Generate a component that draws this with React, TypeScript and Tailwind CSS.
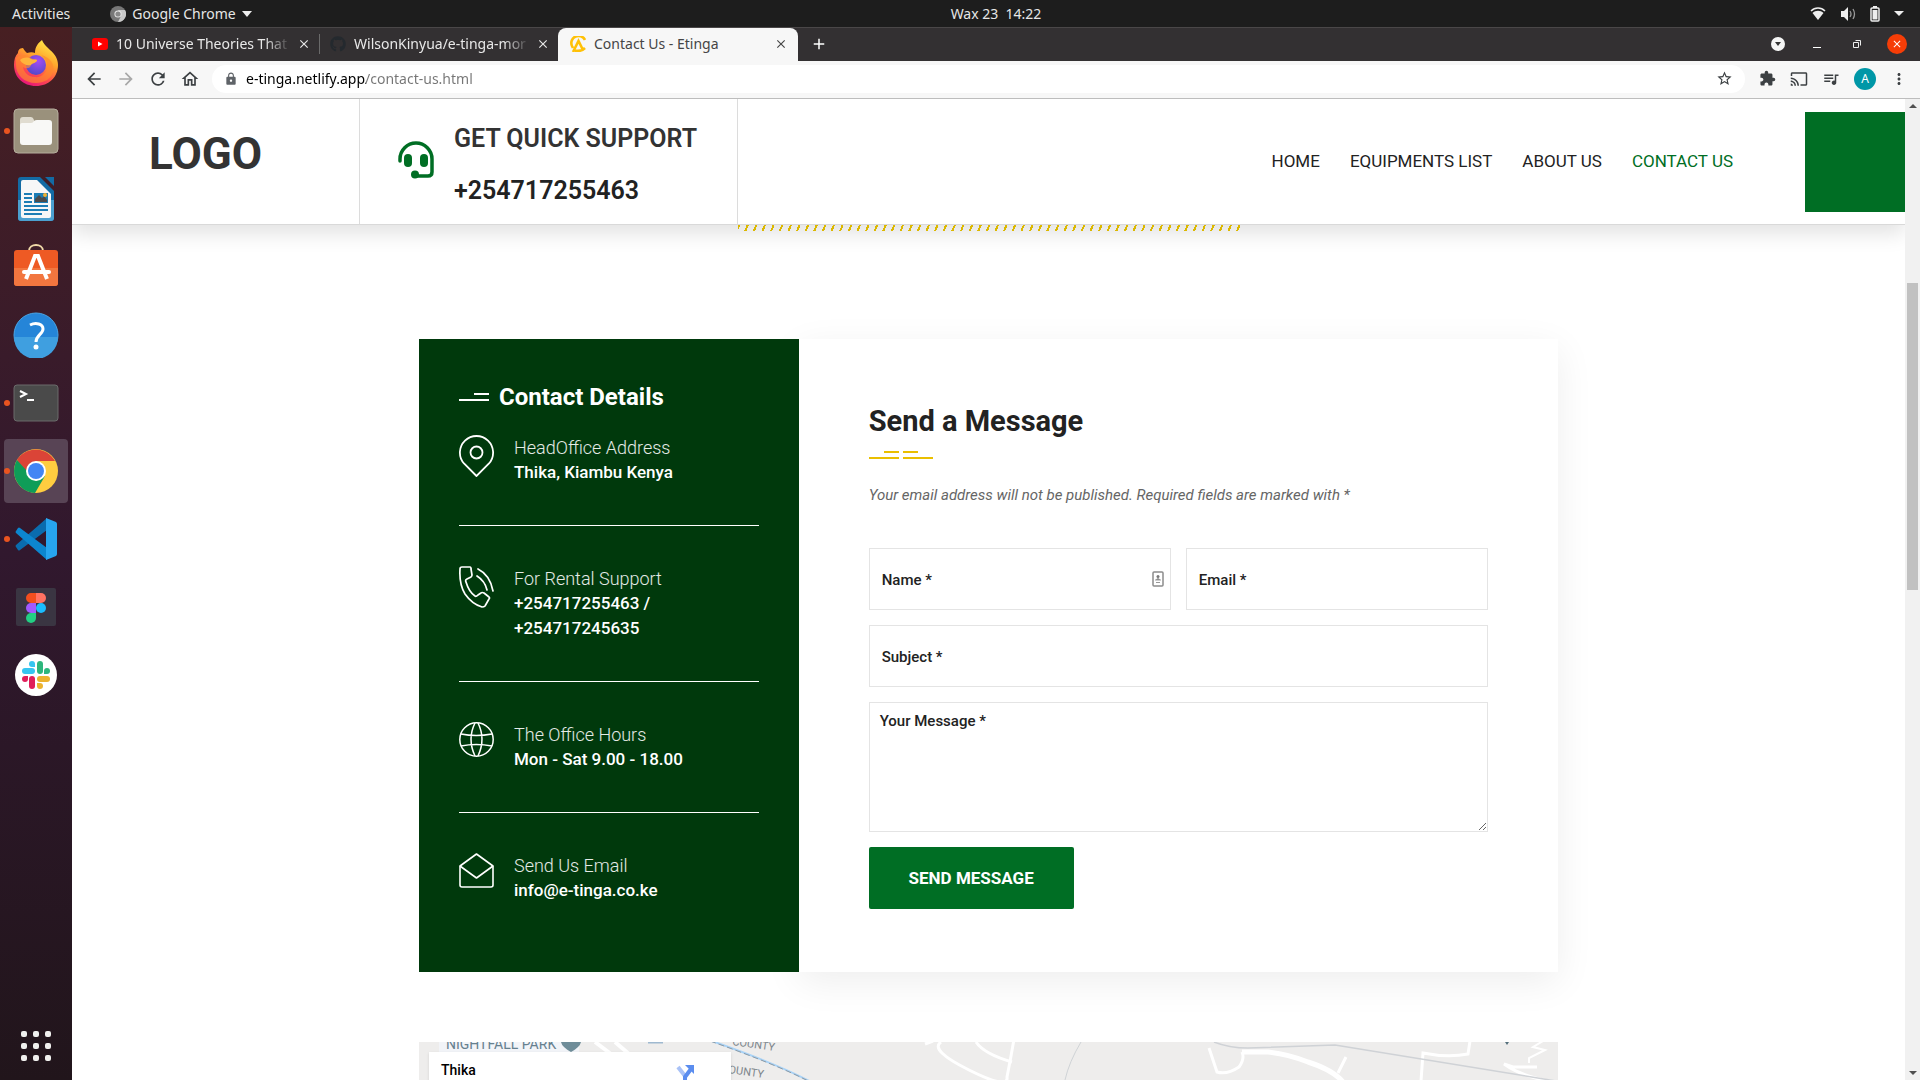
import type { ReactNode } from "react";
import {
  MdArrowBack,
  MdArrowForward,
  MdRefresh,
  MdLock,
  MdStarBorder,
  MdExtension,
  MdCast,
  MdQueueMusic,
  MdMoreVert,
  MdClose,
  MdAdd,
  MdOutlineHome,
} from "react-icons/md";
import { FaGithub } from "react-icons/fa";

/* ---------- Dock icons ---------- */

function FirefoxIcon() {
  return (
    <svg viewBox="0 0 46 46" className="size-[46px]">
      <defs>
        <linearGradient id="ff" x1="0.8" y1="0" x2="0.3" y2="1">
          <stop offset="0" stopColor="#fff14a" />
          <stop offset="0.4" stopColor="#ffa42c" />
          <stop offset="0.7" stopColor="#ff4f4a" />
          <stop offset="1" stopColor="#e5127d" />
        </linearGradient>
        <radialGradient id="ffp" cx="0.6" cy="0.3" r="0.7">
          <stop offset="0" stopColor="#a44bf5" />
          <stop offset="1" stopColor="#5549c9" />
        </radialGradient>
      </defs>
      <path
        d="M29 0c1 3 3 5 6 8l2 2c5 4 8 9 8 15 0 12-9 21-22 21S1 37 1 25c0-5 1-9 4-12 0-2 1-5 5-5 1 2 2 3 4 5 3-1 6-1 8 0 0-6 3-10 7-13z"
        fill="url(#ff)"
      />
      <circle cx="23" cy="25" r="10" fill="url(#ffp)" />
      <path d="M3 18c5-4 10-4 15 0 2 2 5 1 6 2 0 3-5 3-6 5-1 4-5 4-8 2 1 6 6 10 12 10 6 1 12-4 12-10 1-6-3-9-6-12 9 2 14 9 12 17-2 7-9 11-17 11C11 43 3 35 3 25z" fill="#ff8b2c" opacity=".65" />
      <path d="M7 20c4-3 8-3 11-1 2 1 5 0 6 1 0 3-5 3-6 5-4 1-9-1-11-5z" fill="#ffb43c" />
    </svg>
  );
}

function FilesIcon() {
  return (
    <svg viewBox="0 0 46 46" className="size-[46px]">
      <rect x="1" y="1" width="44" height="44" rx="4" fill="#9a917c" stroke="#b5ad9d" />
      <path d="M7 12q0-3 3-3h8q2 0 3 3l1 3-15 6z" fill="#e0dcd0" />
      <path d="M7 17q0-2 2-2h9q2 0 3-2 1-1 3-1h12q3 0 3 3v19q0 3-3 3H10q-3 0-3-3z" fill="#f8f8f6" />
    </svg>
  );
}

function WriterIcon() {
  return (
    <svg viewBox="0 0 46 46" className="size-[46px]">
      <path d="M8 1h19l14 14v27q0 3-3 3H8q-3 0-3-3V4q0-3 3-3z" fill="#136ba4" />
      <path d="M5 24h36v18q0 3-3 3H8q-3 0-3-3z" fill="#4ba0d0" />
      <path d="M10 4h14l14 14v22q0 2-2 2H10q-2 0-2-2V6q0-2 2-2z" fill="#f7f7f7" />
      <path d="M32 1h9v9z" fill="#136ba4" />
      <path d="M11 18h8M11 22h8M11 26h8M11 30h24M11 34h24M11 38h18" stroke="#1c7db5" strokeWidth="2" />
      <rect x="21" y="17" width="14" height="10" fill="#1c7db5" />
      <path d="M22 26v-3l4-4 3 3 2-2 3 4v2z" fill="#4b4b4b" />
      <circle cx="32" cy="19" r="2" fill="#f0b030" />
    </svg>
  );
}

function SoftwareIcon() {
  return (
    <svg viewBox="0 0 46 46" className="size-[46px]">
      <path d="M16 7c0-8 14-8 14 0" fill="none" stroke="#f0d9a8" strokeWidth="2" />
      <rect x="1" y="6" width="44" height="36" rx="3" fill="#ee5a24" />
      <path d="M1 24h44v15q0 3-3 3H4q-3 0-3-3z" fill="#f2763f" />
      <path d="M13 35 22 12h3l9 23" fill="none" stroke="#fff" strokeWidth="4" />
      <path d="M11 28h25" stroke="#fff" strokeWidth="4" strokeLinecap="round" />
    </svg>
  );
}

function HelpIcon() {
  return (
    <svg viewBox="0 0 46 46" className="size-[46px]">
      <circle cx="23" cy="23" r="22" fill="#2585d8" stroke="#4aa4e4" />
      <path d="M1 25a22 22 0 0 0 44 0z" fill="#3f9fe0" />
      <path d="M17 13c6-3 13-1 13 4s-7 6-7 13" fill="none" stroke="#fff" strokeWidth="3" />
      <circle cx="23" cy="35" r="2.5" fill="#fff" />
    </svg>
  );
}

function TerminalIcon() {
  return (
    <svg viewBox="0 0 46 46" className="size-[46px]">
      <rect x="1" y="5" width="44" height="36" rx="3" fill="#4a4a4a" stroke="#6b6b6b" />
      <path d="M7 11l6 3-6 3M14 20h7" fill="none" stroke="#fff" strokeWidth="2" />
    </svg>
  );
}

function ChromeIcon() {
  return (
    <svg viewBox="0 0 46 46" className="size-[46px]">
      <circle cx="23" cy="23" r="22" fill="#ffcd40" />
      <path d="M23 13h19A22 22 0 0 0 4 12l10 16z" fill="#db4437" />
      <path d="M4 12a22 22 0 0 0 18 33l10-17-9 5z" fill="#0f9d58" />
      <circle cx="23" cy="23" r="10" fill="#fff" />
      <circle cx="23" cy="23" r="8" fill="#4285f4" />
    </svg>
  );
}

function CodeIcon() {
  return (
    <svg viewBox="0 0 46 46" className="size-[46px]">
      <path d="M34 2v12L7 34q-1 1-2 0l-2-3q-1-1 0-2z" fill="#0a6cae" />
      <path d="M34 44V32L7 12q-1-1-2 0l-2 3q-1 1 0 2z" fill="#0c86cf" />
      <path d="M33 2l10 4q1 1 1 2v30q0 1-1 2l-10 4z" fill="#27a5ef" />
    </svg>
  );
}

function FigmaIcon() {
  return (
    <svg viewBox="0 0 46 46" className="size-[46px]">
      <rect x="3" y="4" width="40" height="38" rx="2" fill="#3a3542" />
      <path d="M23 9h-5a5 5 0 0 0 0 10h5z" fill="#f24e1e" />
      <path d="M23 9h5a5 5 0 0 1 0 10h-5z" fill="#ff7262" />
      <path d="M23 19h-5a5 5 0 0 0 0 10h5z" fill="#a259ff" />
      <circle cx="28" cy="24" r="5" fill="#1abcfe" />
      <path d="M23 29h-5a5 5 0 1 0 5 5z" fill="#22cf83" />
    </svg>
  );
}

function SlackIcon() {
  return (
    <svg viewBox="0 0 46 46" className="size-[46px]">
      <circle cx="23" cy="23" r="21" fill="#fff" />
      <g strokeWidth="6" strokeLinecap="round">
        <path d="M12 19h7" stroke="#36c5f0" />
        <path d="M27 12v7" stroke="#2eb67d" />
        <path d="M27 27h7" stroke="#ecb22e" />
        <path d="M19 27v7" stroke="#e01e5a" />
      </g>
      <path d="M16 12a3 3 0 0 1 6 0v3h-3a3 3 0 0 1-3-3z" fill="#36c5f0" />
      <path d="M31 22v-3a3 3 0 1 1 3 3z" fill="#2eb67d" />
      <path d="M24 31h3a3 3 0 1 1-3 3z" fill="#ecb22e" />
      <path d="M15 24v3a3 3 0 1 1-3-3z" fill="#e01e5a" />
    </svg>
  );
}

const dockApps: { name: string; icon: ReactNode; running?: boolean; active?: boolean }[] = [
  { name: "Firefox", icon: <FirefoxIcon /> },
  { name: "Files", icon: <FilesIcon />, running: true },
  { name: "Writer", icon: <WriterIcon /> },
  { name: "Software", icon: <SoftwareIcon /> },
  { name: "Help", icon: <HelpIcon /> },
  { name: "Terminal", icon: <TerminalIcon />, running: true },
  { name: "Chrome", icon: <ChromeIcon />, running: true, active: true },
  { name: "Code", icon: <CodeIcon />, running: true },
  { name: "Figma", icon: <FigmaIcon /> },
  { name: "Slack", icon: <SlackIcon /> },
];

function Dock() {
  return (
    <nav
      aria-label="Dock"
      className="flex w-18 shrink-0 flex-col items-center bg-linear-to-b from-[#471f22] via-[#31182e] to-[#21151b] pt-0.5"
    >
      {dockApps.map((app) => (
        <div key={app.name} className="flex h-[68px] w-full items-center justify-center">
          <button
            aria-label={app.name}
            className={
              app.active
                ? "relative flex size-16 items-center justify-center rounded bg-[#584455]"
                : "relative flex size-16 items-center justify-center rounded"
            }
          >
            {app.running && <span className="absolute left-0 size-1.5 rounded-full bg-[#e95420]" />}
            {app.icon}
          </button>
        </div>
      ))}
      <button aria-label="Show applications" className="mt-auto flex h-[68px] items-center">
        <svg viewBox="0 0 30 30" className="size-[30px]" fill="#f0f0ee">
          {[0, 12, 24].map((y) =>
            [0, 12, 24].map((x) => <rect key={`${x}-${y}`} x={x} y={y} width="6" height="6" rx="2" />)
          )}
        </svg>
      </button>
    </nav>
  );
}

/* ---------- Desktop top bar ---------- */

function TopBar() {
  return (
    <header className="grid h-[27px] shrink-0 grid-cols-[1fr_auto_1fr] items-center bg-[#1d1d1d] px-3 text-sm text-[#e6e6e6]">
      <div className="flex items-center">
        <button>Activities</button>
        <button className="ml-10 flex items-center gap-1.5">
          <svg viewBox="0 0 16 16" className="size-4">
            <circle cx="8" cy="8" r="8" fill="#777" />
            <path d="M8 4h7A8 8 0 0 1 8 16l3-6z" fill="#c9c9c9" />
            <circle cx="8" cy="8" r="3.6" fill="#e8e8e8" />
            <circle cx="8" cy="8" r="2.6" fill="#888" />
          </svg>
          Google Chrome
          <svg viewBox="0 0 10 6" className="h-1.5 w-2.5" fill="#eee">
            <path d="M0 0h10L5 6z" />
          </svg>
        </button>
      </div>
      <button className="ml-18 whitespace-pre">Wax 23  14:22</button>
      <div className="flex items-center justify-end gap-3.5 pr-1">
        <svg viewBox="0 0 16 14" className="h-3.5 w-4">
          <path d="M1 4c4-4 10-4 14 0" fill="none" stroke="#eee" strokeWidth="1.5" />
          <path d="M2.5 6c3-3 8-3 11 0L8 13z" fill="#eee" />
        </svg>
        <svg viewBox="0 0 16 14" className="h-3.5 w-4">
          <path d="M1 4h3l4-4v14l-4-4H1z" fill="#eee" />
          <path d="M10 4q2 3 0 6M13 2q3 5 0 10" fill="none" stroke="#999" strokeWidth="1.3" />
        </svg>
        <svg viewBox="0 0 10 16" className="h-4 w-2.5">
          <rect x="3" y="0" width="4" height="2" fill="#eee" />
          <rect x="1" y="2" width="8" height="13" rx="1" fill="none" stroke="#eee" strokeWidth="1.5" />
          <rect x="2.5" y="4" width="5" height="9.5" fill="#eee" />
        </svg>
        <svg viewBox="0 0 10 6" className="h-1.5 w-2.5" fill="#eee">
          <path d="M0 0h10L5 5z" />
        </svg>
      </div>
    </header>
  );
}

/* ---------- Browser chrome ---------- */

function BrandMark() {
  return (
    <svg viewBox="0 0 16 16" className="size-4 shrink-0" fill="none" stroke="#ffc107" strokeWidth="2.6">
      <path d="M15 4A7 7 0 0 0 2 10l1 2M15 12q-4 4-10 2.500M3 16 8.500 5l4 8" />
    </svg>
  );
}

function Tab({ icon, title, separator }: { icon: ReactNode; title: string; separator?: boolean }) {
  return (
    <div className="flex h-full w-[238px] items-center pb-0.5 pl-2.5 text-[#e8e8e8]">
      {icon}
      <span className="ml-2 flex-1 overflow-hidden mask-r-from-85% text-sm whitespace-nowrap">{title}</span>
      <button aria-label="Close tab" className="mr-2 ml-1.5">
        <MdClose className="size-3.5" />
      </button>
      {separator && <span className="h-5 w-px bg-[#6a6a6a]" />}
    </div>
  );
}

function TabStrip() {
  return (
    <div className="flex h-[34px] items-center border-t border-[#4a4748] bg-[#333032] pl-2.5">
      <Tab
        separator
        title="10 Universe Theories That"
        icon={
          <svg viewBox="0 0 16 12" className="h-3 w-4 shrink-0">
            <rect width="16" height="12" rx="3" fill="#f00" />
            <path d="M6 3.5v5L10.500 6z" fill="#fff" />
          </svg>
        }
      />
      <Tab title="WilsonKinyua/e-tinga-mor" icon={<FaGithub className="size-4 shrink-0 text-[#24292e]" />} />
      <div className="flex h-full w-[240px] items-center rounded-t-lg bg-[#f7f7f7] pr-2.5 pb-0.5 pl-3 text-[#454545]">
        <BrandMark />
        <span className="ml-2 flex-1 text-sm whitespace-nowrap">Contact Us - Etinga</span>
        <button aria-label="Close tab">
          <MdClose className="size-3.5" />
        </button>
      </div>
      <button aria-label="New tab" className="ml-3 pb-0.5 text-white">
        <MdAdd className="size-[18px]" />
      </button>
      <div className="ml-auto flex items-center pr-[13px] pb-0.5">
        <button aria-label="Search tabs" className="flex size-3.5 items-center justify-center rounded-full bg-[#f5f5f5]">
          <svg viewBox="0 0 6 4" className="h-1 w-1.5" fill="#333">
            <path d="M0 0h6L3 4z" />
          </svg>
        </button>
        <button aria-label="Minimise" className="ml-7 flex h-2 w-2 items-end">
          <span className="h-px w-2 bg-white" />
        </button>
        <button aria-label="Restore" className="ml-8">
          <svg viewBox="0 0 8 8" className="size-2" fill="none" stroke="#eee">
            <path d="M.5 2.500h5v5h-5zM2.500.5h5v5" />
          </svg>
        </button>
        <button
          aria-label="Close window"
          className="ml-[26px] flex size-5 items-center justify-center rounded-full bg-[#f63d07] text-white"
        >
          <MdClose className="size-3" />
        </button>
      </div>
    </div>
  );
}

function Toolbar() {
  return (
    <div className="flex h-[38px] items-center border-b border-[#bdbdbd] bg-[#f7f7f7] px-3 pb-0.5 text-[#3c4043]">
      <div className="flex items-center gap-3">
        <button aria-label="Back"><MdArrowBack className="size-5" /></button>
        <button aria-label="Forward" className="text-[#a8a8a8]"><MdArrowForward className="size-5" /></button>
        <button aria-label="Reload"><MdRefresh className="size-5" /></button>
        <button aria-label="Home"><MdOutlineHome className="size-5" /></button>
      </div>
      <div className="ml-3 flex h-7 flex-1 items-center rounded-full bg-white px-3">
        <MdLock className="size-3.5 text-[#5f6368]" />
        <input
          aria-label="Address"
          type="text"
          defaultValue="e-tinga.netlify.app/contact-us.html"
          className="ml-2 min-w-0 flex-1 bg-[linear-gradient(90deg,#000_120px,#757575_120px)] bg-clip-text text-sm text-transparent outline-none"
        />
        <button aria-label="Bookmark" className="ml-2"><MdStarBorder className="size-[17px]" /></button>
      </div>
      <div className="ml-3.5 flex items-center gap-3.5">
        <button aria-label="Extensions"><MdExtension className="size-[17px]" /></button>
        <button aria-label="Cast"><MdCast className="size-[18px]" /></button>
        <button aria-label="Media"><MdQueueMusic className="size-[18px]" /></button>
        <button aria-label="Profile" className="flex size-[22px] items-center justify-center rounded-full bg-[#0097a7] text-xs text-white">
          A
        </button>
        <button aria-label="Menu"><MdMoreVert className="size-[18px]" /></button>
      </div>
    </div>
  );
}

function Scrollbar() {
  return (
    <div className="flex w-[15px] shrink-0 flex-col items-center justify-between bg-[#f1f1f1] py-[5px]" aria-hidden="true">
      <svg viewBox="0 0 8 4" className="h-1 w-2" fill="#505050"><path d="M4 0l4 4H0z" /></svg>
      <div className="flex w-full grow flex-col px-0.5 pt-[175px]">
        <div className="h-[39%] shrink-0 bg-[#c1c1c1]" />
      </div>
      <svg viewBox="0 0 8 4" className="h-1 w-2" fill="#505050"><path d="M4 4l4-4H0z" /></svg>
    </div>
  );
}

/* ---------- Web page ---------- */

const navLinks = ["HOME", "EQUIPMENTS LIST", "ABOUT US", "CONTACT US"];

function SiteHeader() {
  return (
    <header className="relative z-10 flex h-[126px] shrink-0 border-b border-[#d9d9d9] bg-white shadow-[0_8px_20px_rgba(0,0,0,0.12)]">
      <div className="flex w-[288px] items-center border-r border-[#dcdcdc] pb-4 pl-[77px]">
        <a href="#home" className="text-[44px] leading-none font-bold text-[#333]">LOGO</a>
      </div>
      <div className="flex w-[378px] items-center gap-5 border-r border-[#dcdcdc] pl-[38px]">
        <svg viewBox="0 0 36 38" className="mb-1 h-[38px] w-9 shrink-0">
          <path d="M2 20v-2a16 16 0 0 1 32 0v13q0 4-4 4H18" fill="none" stroke="#006e24" strokeWidth="3.500" strokeLinecap="round" />
          <rect x="6" y="13" width="8" height="13" rx="4" fill="#006e24" />
          <rect x="22" y="13" width="8" height="13" rx="4" fill="#006e24" />
          <circle cx="17" cy="33.500" r="4" fill="#006e24" />
        </svg>
        <div className="pt-1.5 text-[25px] leading-[52px] font-semibold whitespace-nowrap text-[#333]">
          <p>GET QUICK SUPPORT</p>
          <p className="text-[#222]">+254717255463</p>
        </div>
      </div>
      <nav className="ml-auto flex items-center gap-[30px] text-[17px] text-[#222]">
        {navLinks.map((label) => (
          <a key={label} href="#nav" className={label === "CONTACT US" ? "text-[#006e24]" : ""}>
            {label}
          </a>
        ))}
      </nav>
      <div className="mt-[13px] ml-[72px] size-[100px] bg-[#006e24]" />
    </header>
  );
}

const iconClass = "w-[35px] shrink-0";

const contacts: { title: string; lines: string[]; icon: ReactNode }[] = [
  {
    title: "HeadOffice Address",
    lines: ["Thika, Kiambu Kenya"],
    icon: (
      <svg viewBox="0 0 35 42" className={iconClass} fill="none" stroke="#fff" strokeWidth="1.800">
        <path d="M17.500 41 5 28.500a16.600 16.600 0 1 1 25 0z" />
        <circle cx="17.500" cy="17.500" r="6" />
      </svg>
    ),
  },
  {
    title: "For Rental Support",
    lines: ["+254717255463 /", "+254717245635"],
    icon: (
      <svg viewBox="0 0 35 42" className={iconClass} fill="none" stroke="#fff" strokeWidth="1.700" strokeLinejoin="round" strokeLinecap="round">
        <path d="M1 3q0-2 2-2h8q1 0 1 2l1 6q0 1-1 2l-4 2q-2 1-1 3 3 10 9 14 1 1 3-1l3-2q1-1 3 0l5 4q1 1 0 2l-4 7q-1 1-3 1Q13 38 6 28 0 18 1 3z" />
        <path d="M19 3q12 6 15 22M18 10q8 5 10 14" />
      </svg>
    ),
  },
  {
    title: "The Office Hours",
    lines: ["Mon - Sat 9.00 - 18.00"],
    icon: (
      <svg viewBox="0 0 35 35" className={iconClass} fill="none" stroke="#fff" strokeWidth="1.500">
        <circle cx="17.500" cy="17.500" r="16.700" />
        <path d="M16 1q-8 16 0 33M19 1q8 16 0 33M2 12q15 3 31 0M2 24q15-3 31 0" />
      </svg>
    ),
  },
  {
    title: "Send Us Email",
    lines: ["info@e-tinga.co.ke"],
    icon: (
      <svg viewBox="0 0 35 35" className={iconClass} fill="none" stroke="#fff" strokeWidth="1.600" strokeLinejoin="round">
        <path d="M1 13 17.500 1 34 13v19q0 2-2 2H3q-2 0-2-2z" />
        <path d="M1 13l16.500 12L34 13" />
      </svg>
    ),
  },
];

function ContactDetails() {
  return (
    <aside className="relative w-1/3 bg-[#00390c] px-10 pt-10 pb-[69px] text-white">
      <h2 className="mb-5 flex items-center gap-2.5 text-2xl leading-9 font-bold">
        <span className="flex w-[30px] flex-col items-end gap-1">
          <span className="h-0.5 w-[15px] bg-white" />
          <span className="h-0.5 w-full bg-white" />
        </span>
        Contact Details
      </h2>
      <ul className="divide-y divide-white text-[17px] leading-[25px]">
        {contacts.map((c) => (
          <li key={c.title} className="flex items-start gap-5 py-10 first:pt-0 last:pb-0">
            {c.icon}
            <div className="font-medium">
              <p className="text-lg leading-[25px] font-light text-white/90">{c.title}</p>
              {c.lines.map((l) => (
                <p key={l}>{l}</p>
              ))}
            </div>
          </li>
        ))}
      </ul>
    </aside>
  );
}

const fieldClass =
  "block h-[62px] w-full border border-[#e4e4e4] bg-white px-3 pt-0.5 text-[15px] font-medium text-[#222] placeholder:text-[#222]";

function MessageForm() {
  return (
    <section className="w-2/3 bg-white px-[70px] pt-[60px] pb-[63px] shadow-[0_10px_36px_rgba(0,0,0,0.07)]">
      <h1 className="text-[29px] leading-[45px] font-bold text-[#222]">Send a Message</h1>
      <div className="mt-[7px] flex w-16 flex-col gap-1">
        <div className="flex justify-center gap-1">
          <span className="h-0.5 w-[15px] bg-[#eabf00]" />
          <span className="h-0.5 w-[15px] bg-[#eabf00]" />
        </div>
        <div className="flex justify-between">
          <span className="h-0.5 w-[30px] bg-[#eabf00]" />
          <span className="h-0.5 w-[30px] bg-[#eabf00]" />
        </div>
      </div>
      <p className="mt-6 text-[15px] leading-6 text-[#666] italic">
        Your email address will not be published. Required fields are marked with *
      </p>
      <form className="mt-[41px] flex flex-col gap-[15px]">
        <div className="grid grid-cols-2 gap-[15px]">
          <div className="relative">
            <input aria-label="Name" type="text" placeholder="Name *" className={fieldClass} />
            <svg viewBox="0 0 12 16" className="absolute top-[23px] right-[7px] h-4 w-3">
              <rect x="1" y="1" width="10" height="14" rx="1" fill="#fff" stroke="#8c8c8c" strokeWidth="1.500" />
              <circle cx="6" cy="5.500" r="1.500" fill="#777" />
              <path d="M3.500 9q2.500-3 5 0zM4 11.500h4" stroke="#999" fill="#777" />
            </svg>
          </div>
          <input aria-label="Email" type="email" placeholder="Email *" className={fieldClass} />
        </div>
        <input aria-label="Subject" type="text" placeholder="Subject *" className={fieldClass} />
        <textarea
          aria-label="Your Message"
          placeholder="Your Message *"
          className="block h-[130px] w-full resize border border-[#e4e4e4] bg-white px-2.5 py-1.5 text-[15px] leading-6 font-medium text-[#222] placeholder:text-[#222]"
        />
        <button type="button" className="h-[62px] w-[205px] rounded-xs bg-[#006e24] pt-0.5 text-[17px] font-bold text-white">
          SEND MESSAGE
        </button>
      </form>
    </section>
  );
}

function MapStrip() {
  return (
    <section aria-label="Map" className="relative h-[38px] overflow-hidden bg-[#eeedec]">
      <svg viewBox="0 0 1140 38" className="h-[38px] w-full" preserveAspectRatio="xMinYMin slice" fill="none">
        <path d="M20 0h140v10H20z" fill="#f2f4f8" />
        <path d="M176 0l16 12M196 0l14 12" stroke="#fff" strokeWidth="4" />
        <path d="M290 -2C330 12 370 28 392 40" stroke="#a9d3f7" strokeWidth="2" />
        <path d="M291 -1C331 13 371 29 393 41" stroke="#8c9aa5" strokeWidth="1" strokeDasharray="6 3" />
        <g stroke="#fff" strokeWidth="3">
          <path d="M506 2l8-3M522 0q-12 8 28 28t38 7q4-20 7-38M557 0q8 12 36 20" />
          <path d="M790 6l8 24q10 3 22-5 6-8 3-15M927 15l-8 16M1051-1l-2 13q-20 4-45-1l-2 28M1118 25h-24l-9-3q20 14 52 18" />
          <path d="M823 10h26q20 2 40 10 25 8 35 20" strokeWidth="5" />
          <path d="M1124-1l-10 6 12 3-16 8v5" strokeWidth="2" />
        </g>
        <path d="M662 0q-12 20-16 38" stroke="#cfd3d6" />
        <path d="M795 0q15 6 34 6l87-3 221 36" stroke="#cfd2d6" strokeWidth="1.500" />
        <path d="M142 0h20q-1 5-10 10-9-5-10-10z" fill="#6f8d99" />
        <path d="M229 0h15" stroke="#9fb9d0" strokeWidth="3" />
        <path d="M1086 0h4l-2 3z" fill="#54707c" />
        <g fontFamily="Roboto" fill="#7d858b">
          <text x="27" y="7" fontSize="14" fill="#66808f">NIGHTFALL PARK</text>
          <text x="313" y="3" fontSize="11" transform="rotate(8 313 3)">COUNTY</text>
          <text x="302" y="30" fontSize="11" transform="rotate(8 302 30)">COUNTY</text>
        </g>
      </svg>
      <div className="absolute top-2.5 left-2.5 flex h-16 w-[302px] items-start justify-between bg-white pt-2 pr-9 pl-3 text-sm font-medium text-black shadow">
        <span>Thika</span>
        <svg viewBox="0 0 20 22" className="mt-1 h-[22px] w-5" fill="none" strokeWidth="4">
          <path d="M3 3l7 9" stroke="#a9c2f7" />
          <path d="M10 22V13l6-8" stroke="#5b8def" />
          <path d="M10 1h9v9z" fill="#5b8def" />
        </svg>
      </div>
    </section>
  );
}

export default function App() {
  return (
    <div className="flex h-screen flex-col overflow-hidden bg-white font-['Noto_Sans',sans-serif]">
      <TopBar />
      <div className="flex min-h-0 flex-1">
        <Dock />
        <div className="flex min-w-0 flex-1 flex-col">
          <TabStrip />
          <Toolbar />
          <div className="flex min-h-0 flex-1">
            <main className="flex min-w-0 flex-1 flex-col overflow-hidden font-['Roboto',sans-serif]">
              <SiteHeader />
              <div className="relative z-20 ml-[666px] h-1.5 w-[502px] shrink-0 bg-[repeating-linear-gradient(112deg,#dcb800_0px,#dcb800_2px,transparent_2px,transparent_8px)]" />
              <div className="mx-auto w-full max-w-[1139px] pt-[108px]">
                <div className="flex">
                  <ContactDetails />
                  <MessageForm />
                </div>
                <div className="mt-[70px]">
                  <MapStrip />
                </div>
              </div>
            </main>
            <Scrollbar />
          </div>
        </div>
      </div>
    </div>
  );
}
